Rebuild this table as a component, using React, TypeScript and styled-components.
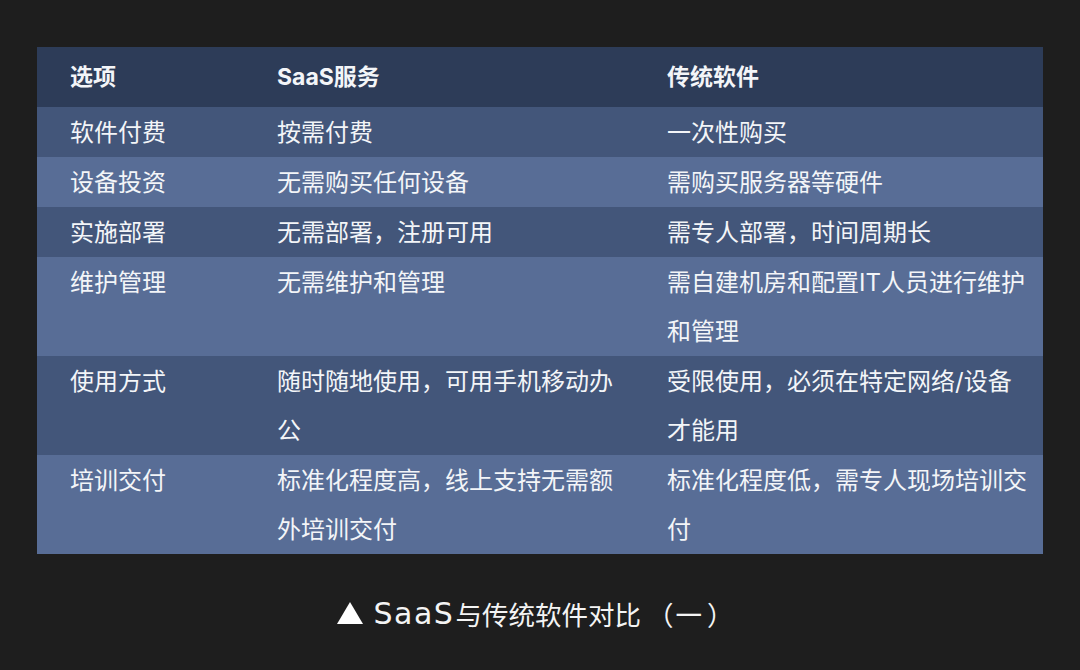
import React from "react";
import styled, { createGlobalStyle } from "styled-components";

const GlobalStyle = createGlobalStyle`
  html, body {
    margin: 0;
    padding: 0;
    background: #1e1e1e;
  }
  body {
    font-family: "Inter", "Noto Sans CJK SC", "Noto Sans", sans-serif;
    color: #f2f4f7;
  }
`;

const Page = styled.div`
  width: 1080px;
  height: 670px;
  box-sizing: border-box;
  padding: 47px 37px 0;
  display: flex;
  flex-direction: column;
  align-items: stretch;
  background: #1e1e1e;
  overflow: hidden;
`;

const Table = styled.div`
  display: flex;
  flex-direction: column;
  width: 1006px;
`;

const Row = styled.div<{ $bg: string; $header?: boolean }>`
  display: grid;
  grid-template-columns: 207px 390px 1fr;
  background: ${(p) => p.$bg};
  min-height: ${(p) => (p.$header ? "60px" : "50px")};
  align-items: ${(p) => (p.$header ? "center" : "start")};
  padding-top: ${(p) => (p.$header ? "0" : "1px")};
  box-sizing: border-box;
`;

const Cell = styled.div<{ $header?: boolean }>`
  padding: 0 10px 0 33px;
  font-size: ${(p) => (p.$header ? "23px" : "24px")};
  font-weight: ${(p) => (p.$header ? 700 : 400)};
  line-height: 49px;
  color: #f3f5f8;
  word-break: break-all;
`;

const Caption = styled.div`
  margin-top: 40px;
  padding-right: 10px;
  display: flex;
  justify-content: center;
  align-items: center;
  font-family: "Noto Sans CJK SC", sans-serif;
  font-size: 26.5px;
  line-height: 40px;
  color: #f4f4f4;
  white-space: nowrap;
`;

const Latin = styled.span`
  font-family: "DejaVu Sans", "Inter", sans-serif;
  font-size: 30px;
  letter-spacing: 1.5px;
  margin-right: 1px;
`;

const Bracket = styled.span<{ $before: number; $after: number }>`
  margin-left: ${(p) => p.$before}px;
  margin-right: ${(p) => p.$after}px;
`;

const Tri = styled.span`
  display: inline-block;
  width: 0;
  height: 0;
  border-left: 13px solid transparent;
  border-right: 13px solid transparent;
  border-bottom: 22px solid #ffffff;
  margin-right: 11px;
  margin-top: -2px;
`;

const HEADER = "#2d3c58";
const DARK = "#43567a";
const LIGHT = "#586d96";

const rows: [string, string, string][] = [
  ["软件付费", "按需付费", "一次性购买"],
  ["设备投资", "无需购买任何设备", "需购买服务器等硬件"],
  ["实施部署", "无需部署，注册可用", "需专人部署，时间周期长"],
  ["维护管理", "无需维护和管理", "需自建机房和配置IT人员进行维护和管理"],
  ["使用方式", "随时随地使用，可用手机移动办公", "受限使用，必须在特定网络/设备才能用"],
  ["培训交付", "标准化程度高，线上支持无需额外培训交付", "标准化程度低，需专人现场培训交付"],
];

export default function App() {
  return (
    <>
      <GlobalStyle />
      <Page>
        <Table>
          <Row $bg={HEADER} $header>
            <Cell $header>选项</Cell>
            <Cell $header>SaaS服务</Cell>
            <Cell $header>传统软件</Cell>
          </Row>
          {rows.map((r, i) => (
            <Row key={i} $bg={i % 2 === 0 ? DARK : LIGHT}>
              <Cell>{r[0]}</Cell>
              <Cell>{r[1]}</Cell>
              <Cell>{r[2]}</Cell>
            </Row>
          ))}
        </Table>
        <Caption>
          <Tri />
          <Latin>SaaS</Latin>
          <span>与传统软件对比</span>
          <Bracket $before={6} $after={2}>（</Bracket>
          <span>一</span>
          <Bracket $before={5} $after={0}>）</Bracket>
        </Caption>
      </Page>
    </>
  );
}
